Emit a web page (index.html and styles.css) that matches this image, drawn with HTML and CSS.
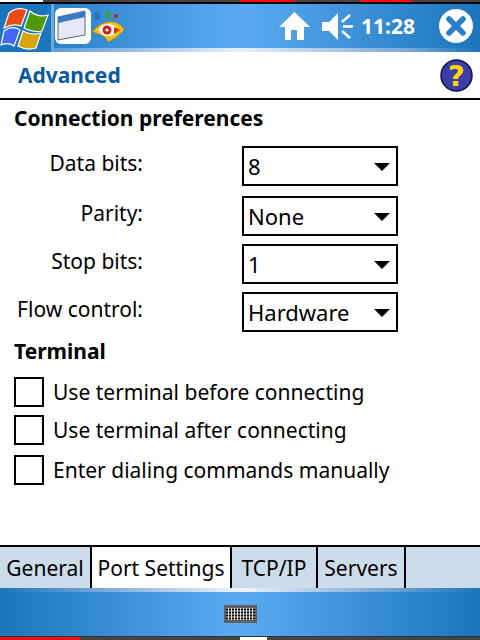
FILE: index.html
```html
<!DOCTYPE html>
<html lang="en">
<head>
    <meta charset="UTF-8">
    <title>Advanced</title>
    <link rel="stylesheet" href="styles.css">
</head>
<body>
    <div class="phone">
        <div class="strip-top">
            <span class="s-white" style="width:43px"></span>
            <span class="s-dark" style="width:197px"></span>
            <span class="s-red" style="width:55px"></span>
            <span class="s-dark" style="width:65px"></span>
            <span class="s-red" style="width:52px"></span>
            <span class="s-dark" style="width:68px"></span>
        </div>
        <div class="taskbar">
            <div class="start">
                <svg width="50" height="46" viewBox="0 0 50 46">
                    <path d="M9 9 Q17 2 27 6 L21 22 Q13 19 4 24Z" fill="#ec4a14" stroke="#fff" stroke-width="1.200"/>
                    <path d="M30 7 Q38 14 48 11 L42 27 Q33 29 24 24Z" fill="#4f9a08" stroke="#fff" stroke-width="1.200"/>
                    <path d="M4 27 Q12 21 20 26 L14 42 Q8 38 1 41Z" fill="#4466f4" stroke="#fff" stroke-width="1.200"/>
                    <path d="M23 27 Q32 32 41 29 L36 44 Q27 47 18 42Z" fill="#d8a40c" stroke="#fff" stroke-width="1.200"/>
                </svg>
            </div>
            <div class="task-icons">
                <svg class="win-icon" width="36" height="36" viewBox="0 0 36 36">
                    <rect width="36" height="36" rx="6" fill="#fff"/>
                    <path d="M3 9 L30 3 V27 L3 32Z" fill="#e4e8f4" stroke="#5c6478"/>
                    <path d="M3 9 L30 3 V9 L3 15Z" fill="#3c78c8"/>
                </svg>
                <svg width="34" height="34" viewBox="0 0 34 34">
                    <ellipse cx="5" cy="7" rx="3" ry="4" fill="#2c70c8"/>
                    <ellipse cx="16" cy="6" rx="2.500" ry="4" fill="#40a040"/>
                    <circle cx="24" cy="7" r="2" fill="#c82020"/>
                    <path d="M0 23 Q10 11 22 13 Q30 15 32 21 Q24 30 16 33 Q14 26 0 23Z" fill="#f4c010" stroke="#b07808" stroke-width=".6"/>
                    <ellipse cx="16" cy="21" rx="9" ry="6" fill="#fff"/>
                    <circle cx="15" cy="21" r="4.500" fill="#d02020"/>
                    <circle cx="15" cy="21" r="1.600" fill="#fff"/>
                    <path d="M22 18 L28 21 L22 25Z" fill="#e03010"/>
                </svg>
            </div>
            <div class="tray">
                <svg width="31" height="28" viewBox="0 0 31 28"><path d="M15.500 0 L31 15 H25 V28 H18 V18 H12 V28 H6 V15 H0Z" fill="#fff"/></svg>
                <svg class="speaker" width="31" height="27" viewBox="0 0 31 27">
                    <path d="M0 9 H7 L16 0 V27 L7 18 H0Z" fill="#fff"/>
                    <path d="M20 9 L28 2 M21 13.500 H31 M20 18 L28 25" stroke="#fff" stroke-width="2.500" fill="none"/>
                </svg>
                <span class="clock">11:28</span>
                <svg class="close" width="34" height="34" viewBox="0 0 34 34">
                    <circle cx="17" cy="17" r="17" fill="#fff"/>
                    <path d="M10 10 L24 24 M24 10 L10 24" stroke="#2a80c6" stroke-width="5.500" stroke-linecap="round"/>
                </svg>
            </div>
        </div>
        <div class="sheen"></div>
        <div class="title-row">
            <span class="title">Advanced</span>
            <svg width="33" height="33" viewBox="0 0 33 33">
                <circle cx="16.500" cy="16.500" r="15.500" fill="#3a3ea8" stroke="#101840" stroke-width="1.500"/>
                <text class="help-mark" x="16.500" y="27" text-anchor="middle">?</text>
            </svg>
        </div>
        <div class="content">
            <h2 class="section first">Connection preferences</h2>
            <div class="form-rows">
                <div class="field"><label>Data bits:</label><div class="select"><span>8</span><i class="arrow"></i></div></div>
                <div class="field parity"><label>Parity:</label><div class="select"><span>None</span><i class="arrow"></i></div></div>
                <div class="field"><label>Stop bits:</label><div class="select"><span>1</span><i class="arrow"></i></div></div>
                <div class="field"><label>Flow control:</label><div class="select"><span>Hardware</span><i class="arrow"></i></div></div>
            </div>
            <h2 class="section">Terminal</h2>
            <div class="checks">
                <div class="check"><i class="box"></i><span>Use terminal before connecting</span></div>
                <div class="check"><i class="box"></i><span>Use terminal after connecting</span></div>
                <div class="check third"><i class="box"></i><span>Enter dialing commands manually</span></div>
            </div>
        </div>
        <div class="tabs">
            <div class="tab t-general">General</div>
            <div class="tab active t-port">Port Settings</div>
            <div class="tab t-tcp">TCP/IP</div>
            <div class="tab t-servers">Servers</div>
            <div class="tab-rest"></div>
        </div>
        <div class="sheen-bottom"></div>
        <div class="menubar">
            <svg width="33" height="18" viewBox="0 0 33 18">
                <rect width="33" height="18" fill="#606060"/>
                <rect x="2" y="3" width="29" height="12" fill="#ddd"/>
                <path d="M2 4.500 H31 M2 7.500 H31 M2 10.500 H31 M2 13.500 H31" stroke="#000" stroke-width="2" stroke-dasharray="2 1"/>
            </svg>
        </div>
        <div class="strip-bottom">
            <span class="s-red" style="width:80px"></span>
            <span class="s-dark" style="width:160px"></span>
            <span class="s-white" style="width:27px"></span>
            <span class="s-dark" style="width:213px"></span>
        </div>
    </div>
</body>
</html>
```

FILE: styles.css
```css
html, body {
    margin: 0;
    padding: 0;
}
body {
    font-family: "Noto Sans", "DejaVu Sans", sans-serif;
    color: #000;
    background: #fff;
}
.phone {
    width: 480px;
    height: 640px;
    display: flex;
    flex-direction: column;
    overflow: hidden;
}
.strip-top {
    height: 4px;
    display: flex;
    background: #000;
    flex: none;
}
.strip-top span {
    height: 2px;
}
.strip-bottom {
    height: 4px;
    display: flex;
    flex: none;
    background: #333;
}
.strip-bottom span {
    height: 3px;
    margin-top: 1px;
}
.s-white { background: #fff; }
.s-dark { background: #444; }
.s-red { background: #f01010; }

.taskbar {
    height: 44px;
    flex: none;
    display: flex;
    align-items: center;
    background: linear-gradient(to right, #1b75bb 0%, #5cabf2 50%, #1b75bb 100%);
}
.start {
    width: 51px;
    height: 48px;
    margin-bottom: -4px;
    background: #1b75bb;
    border-right: 3px solid #6fa8dc;
    display: flex;
    z-index: 1;
}
.task-icons {
    display: flex;
    align-items: center;
    gap: 1px;
    margin-left: 1px;
}
.tray {
    margin-left: auto;
    display: flex;
    align-items: center;
    padding-right: 7px;
}
.speaker {
    margin-left: 12px;
}
.clock {
    margin-left: 8px;
    color: #fff;
    font-size: 21px;
    font-weight: bold;
    width: 63px;
}
.close {
    margin-left: 15px;
}
.sheen {
    height: 4px;
    flex: none;
    background: linear-gradient(to right, #1b75bb 0%, #5a9ad8 10%, #e8f0fa 50%, #7aa8d4 85%, #1b75bb 100%);
}
.title-row {
    height: 48px;
    flex: none;
    box-sizing: border-box;
    display: flex;
    align-items: center;
    justify-content: space-between;
    padding: 0 7px 0 18px;
    border-bottom: 2px solid #000;
}
.title {
    color: #0a5a9c;
    font-size: 21px;
    font-weight: bold;
}
.help-mark {
    font-family: "DejaVu Sans", sans-serif;
    font-size: 29px;
    font-weight: bold;
    fill: #ffd400;
}
.content {
    flex: 1;
    padding-left: 14px;
}
.section {
    margin: 0;
    font-size: 21px;
    line-height: 26px;
    font-weight: bold;
    padding-top: 6px;
}
.section.first {
    padding-top: 5px;
}
.form-rows {
    display: flex;
    flex-direction: column;
    gap: 8px;
    margin-top: 15px;
}
.field {
    display: flex;
    height: 40px;
}
.field.parity {
    margin-top: 2px;
}
.field label {
    width: 129px;
    text-align: right;
    font-size: 21px;
    line-height: 35px;
}
.select {
    width: 156px;
    height: 40px;
    box-sizing: border-box;
    margin-left: 99px;
    border: 2px solid #000;
    display: flex;
    align-items: center;
    justify-content: space-between;
    padding: 0 6px 0 4px;
    font-size: 22px;
}
.arrow {
    width: 0;
    height: 0;
    border-left: 8px solid transparent;
    border-right: 8px solid transparent;
    border-top: 8px solid #000;
    margin-top: 2px;
}
.checks {
    margin-top: 13px;
    display: flex;
    flex-direction: column;
    gap: 8px;
}
.check {
    display: flex;
    align-items: center;
    height: 30px;
    font-size: 21px;
}
.check.third {
    margin-top: 2px;
}
.box {
    width: 30px;
    height: 30px;
    box-sizing: border-box;
    border: 2px solid #000;
    margin-right: 9px;
    flex: none;
}
.tabs {
    height: 43px;
    flex: none;
    display: flex;
    font-size: 21px;
}
.tab {
    box-sizing: border-box;
    height: 43px;
    line-height: 43px;
    text-align: center;
    background: #ccdcea;
    border-top: 2px solid #000;
    border-right: 2px solid #000;
}
.tab.active {
    background: #fff;
    border-right: 0;
    border-top: 2px solid #000;
}
.t-general { width: 92px; }
.t-port { width: 138px; }
.t-tcp { width: 88px; border-left: 2px solid #000; }
.t-servers { width: 88px; }
.tab-rest {
    flex: 1;
    background: #ccdcea;
    border-top: 2px solid #000;
}
.sheen-bottom {
    height: 4px;
    flex: none;
    background: linear-gradient(to right, #1b75bb 0%, #8ab4dc 25%, #f0f4fc 50%, #8ab4dc 75%, #1b75bb 100%);
}
.menubar {
    height: 44px;
    flex: none;
    display: flex;
    align-items: center;
    justify-content: center;
    background: linear-gradient(to right, #1b75bb 0%, #5cabf2 50%, #1b75bb 100%);
}
```
